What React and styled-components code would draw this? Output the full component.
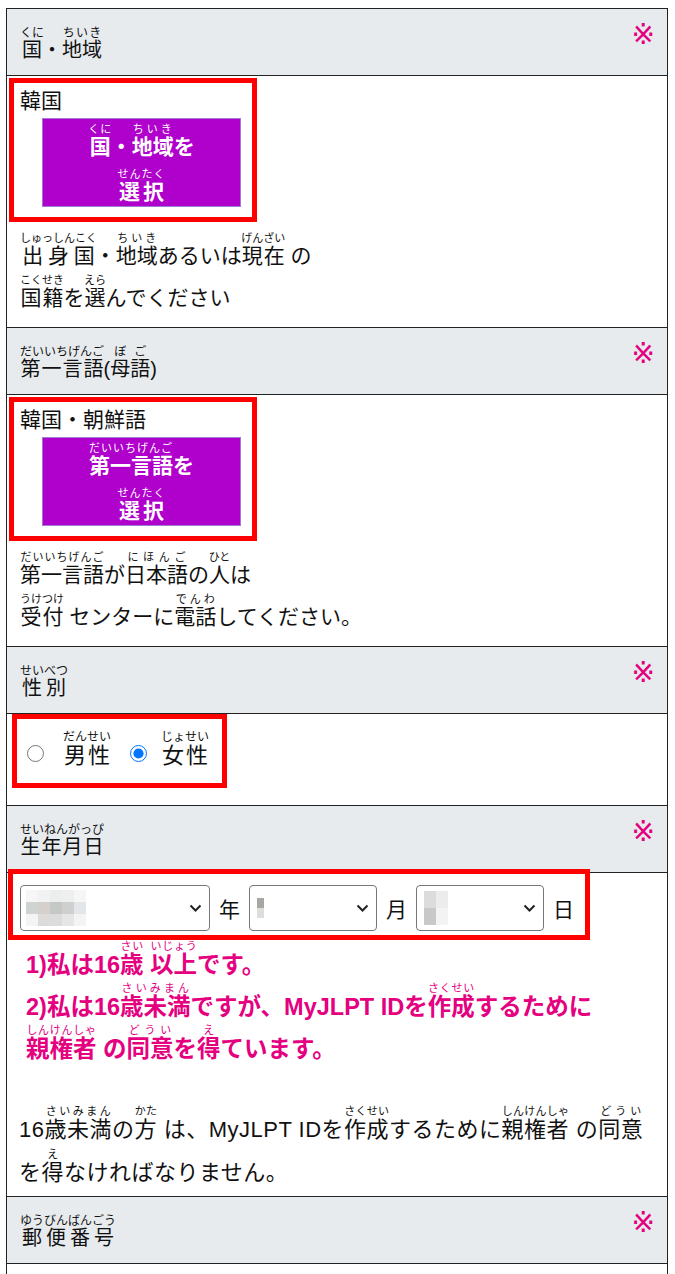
import React from 'react';
import styled, { createGlobalStyle } from 'styled-components';

const Global = createGlobalStyle`
  html, body { margin: 0; padding: 0; background: #fff; }
  body {
    font-family: 'Liberation Sans', 'Noto Sans CJK JP', sans-serif;
    color: #111;
  }
  rt { font-size: 11px; font-weight: normal; }
`;

const Form = styled.div`
  margin: 8px 0 0 6px;
  width: 662px;
  box-sizing: border-box;
  border: 1px solid #222;
  border-bottom: none;
`;

const Head = styled.div`
  display: flex;
  justify-content: space-between;
  align-items: flex-start;
  height: 67px;
  box-sizing: border-box;
  background: #e7ebee;
  border-bottom: 1px solid #222;
  padding: 17px 12px 0 13px;
`;

const HeadLabel = styled.div`
  font-size: 20px;
  line-height: 26px;
  rt { font-size: 12px; }
`;

const Mark = styled.span`
  color: #e4007f;
  font-family: 'DejaVu Sans', 'Noto Sans CJK JP', sans-serif;
  font-size: 28px;
  line-height: 28px;
  margin-top: -5px;
`;

const Cell = styled.div`
  border-bottom: 1px solid #222;
  padding: ${(p) => p.$pad || '0'};
  min-height: ${(p) => p.$h || '0'};
  box-sizing: border-box;
`;

const Highlight = styled.div`
  width: fit-content;
  border: 5px solid #ff0000;
  margin: ${(p) => p.$m || '0'};
  padding: ${(p) => p.$pad || '0'};
  background: #fff;
  position: relative;
`;

const Value = styled.div`
  font-size: 21px;
  line-height: 28px;
`;

const PickButton = styled.button`
  display: flex;
  flex-direction: column;
  align-items: center;
  justify-content: center;
  width: 199px;
  height: 89px;
  margin: 3px 0 0 22px;
  padding: 0;
  background: #b000cc;
  border: 1px solid #a07ad0;
  color: #fff;
  font-family: inherit;
  font-size: 21px;
  font-weight: bold;
  cursor: pointer;
  rt { font-size: 11px; letter-spacing: 1px; }
`;

const BtnLine = styled.span`
  display: block;
  line-height: 22px;
  padding-top: ${(p) => p.$pt || '0'};
`;

const Note = styled.p`
  margin: 0;
  font-size: 21px;
  line-height: 42px;
  padding: ${(p) => p.$pad || '0'};
`;

const RadioRow = styled.div`
  display: flex;
  align-items: center;
  padding: 11px 13px 7px 10px;
  font-size: 22px;
  line-height: 40px;
  rt { font-size: 12px; }
`;

const Radio = styled.input`
  width: 17px;
  height: 17px;
  margin: 0 ${(p) => p.$mr} 0 0;
  accent-color: #0075ff;
`;

const RadioLabel = styled.label`
  margin-right: ${(p) => p.$mr || '0'};
`;

const DateRow = styled.div`
  display: flex;
  align-items: center;
  gap: 9px;
  font-size: 21px;
`;

const FakeSelect = styled.div`
  position: relative;
  width: ${(p) => p.$w};
  height: 46px;
  box-sizing: border-box;
  border: 1px solid #767676;
  border-radius: 4px;
  background: #fff;
  display: flex;
  align-items: center;
  padding-left: ${(p) => p.$pl || '4px'};
`;

const Chevron = styled.svg`
  position: absolute;
  right: 7px;
  top: 18px;
`;

const Mosaic = styled.div`
  display: grid;
  grid-template-columns: repeat(${(p) => p.$cols}, ${(p) => p.$cw});
  grid-auto-rows: ${(p) => p.$rh};
`;

const Tile = styled.span`
  background: ${(p) => p.$c};
`;

const Pink = styled.div`
  color: #e4007f;
  font-size: 23.5px;
  font-weight: bold;
  line-height: 42px;
  padding: 2px 0 0 19px;
  rt { color: #e4007f; }
`;

const Plain = styled.p`
  margin: 0;
  font-size: 22px;
  letter-spacing: 0.5px;
  line-height: 43px;
  padding: 38px 0 2px 12px;
  rt { letter-spacing: 0; }
`;

const R = ({ t, children }) => (
  <ruby>
    {children}
    <rt>{t}</rt>
  </ruby>
);

const Header = ({ children }) => (
  <Head>
    <HeadLabel>{children}</HeadLabel>
    <Mark>※</Mark>
  </Head>
);

const Select = ({ w, tiles, cols, cw, rh, pl }) => (
  <FakeSelect $w={w} $pl={pl}>
    <Mosaic $cols={cols} $cw={cw} $rh={rh}>
      {tiles.map((c, i) => (
        <Tile key={i} $c={c} />
      ))}
    </Mosaic>
    <Chevron width="13" height="9" viewBox="0 0 13 9">
      <path d="M1.5 1.5 L6.5 6.5 L11.5 1.5" fill="none" stroke="#222" strokeWidth="2" />
    </Chevron>
  </FakeSelect>
);

export default function App() {
  return (
    <>
      <Global />
      <Form>
        <Header>
          <R t="くに">国</R>・<R t="ちいき">地域</R>
        </Header>
        <Cell $pad="2px 0 0 2px" $h="252px">
          <Highlight $pad="4px 11px 10px 6px">
            <Value>韓国</Value>
            <PickButton type="button">
              <BtnLine>
                <R t="くに">国</R>・<R t="ちいき">地域</R>を
              </BtnLine>
              <BtnLine $pt="23px">
                <R t="せんたく">選択</R>
              </BtnLine>
            </PickButton>
          </Highlight>
          <Note $pad="13px 0 0 11px">
            <R t="しゅっしんこく">出身国</R>・<R t="ちいき">地域</R>あるいは<R t="げんざい">現在</R> の
            <br />
            <R t="こくせき">国籍</R>を<R t="えら">選</R>んでください
          </Note>
        </Cell>

        <Header>
          <R t="だいいちげんご">第一言語</R>(<R t="ぼご">母語</R>)
        </Header>
        <Cell $pad="2px 0 0 2px" $h="252px">
          <Highlight $pad="4px 11px 10px 6px">
            <Value>韓国・朝鮮語</Value>
            <PickButton type="button">
              <BtnLine>
                <R t="だいいちげんご">第一言語</R>を
              </BtnLine>
              <BtnLine $pt="23px">
                <R t="せんたく">選択</R>
              </BtnLine>
            </PickButton>
          </Highlight>
          <Note $pad="13px 0 0 11px">
            <R t="だいいちげんご">第一言語</R>が<R t="にほんご">日本語</R>の<R t="ひと">人</R>は
            <br />
            <R t="うけつけ">受付</R> センターに<R t="でんわ">電話</R>してください。
          </Note>
        </Cell>

        <Header>
          <R t="せいべつ">性別</R>
        </Header>
        <Cell $pad="0 0 0 5px" $h="92px">
          <Highlight>
            <RadioRow>
              <Radio type="radio" name="sex" id="m" $mr="19px" readOnly />
              <RadioLabel htmlFor="m" $mr="19px">
                <R t="だんせい">男性</R>
              </RadioLabel>
              <Radio type="radio" name="sex" id="f" $mr="14px" defaultChecked />
              <RadioLabel htmlFor="f">
                <R t="じょせい">女性</R>
              </RadioLabel>
            </RadioRow>
          </Highlight>
        </Cell>

        <Header>
          <R t="せいねんがっぴ">生年月日</R>
        </Header>
        <Cell $h="322px">
          <Highlight $m="-4px 0 0 1px" $pad="11px 11px 4px 7px">
            <DateRow>
              <Select
                w="190px"
                cols={5}
                cw="12px"
                rh="12px"
                pl="5px"
                tiles={[
                  '#f6f6f6', '#f1f2f2', '#eceeee', '#eef0f0', '#f6f6f6',
                  '#cfd3d2', '#d4d0cb', '#c5c9c6', '#cdd0cf', '#e2e6e8',
                  '#f4f4f4', '#dcdbd9', '#dcdcdc', '#e6e6e6', '#f4f4f4',
                ]}
              />
              <span>年</span>
              <Select w="128px" cols={1} cw="7px" rh="10px" pl="7px" tiles={['#a9a7a3', '#dedddb']} />
              <span>月</span>
              <Select
                w="128px"
                cols={2}
                cw="12px"
                rh="17px"
                pl="7px"
                tiles={['#dcdcdc', '#ececec', '#c8c8c8', '#f3f3f3']}
              />
              <span>日</span>
            </DateRow>
          </Highlight>
          <Pink>
            1)私は16<R t="さい">歳</R> <R t="いじょう">以上</R>です。
            <br />
            2)私は16<R t="さいみまん">歳未満</R>ですが、MyJLPT IDを<R t="さくせい">作成</R>するために
            <br />
            <R t="しんけんしゃ">親権者</R> の<R t="どうい">同意</R>を<R t="え">得</R>ています。
          </Pink>
          <Plain>
            16<R t="さいみまん">歳未満</R>の<R t="かた">方</R> は、MyJLPT IDを<R t="さくせい">作成</R>するために<R t="しんけんしゃ">親権者</R> の<R t="どうい">同意</R>
            <br />
            を<R t="え">得</R>なければなりません。
          </Plain>
        </Cell>

        <Header>
          <R t="ゆうびんばんごう">郵便番号</R>
        </Header>
        <Cell $h="40px" />
      </Form>
    </>
  );
}
